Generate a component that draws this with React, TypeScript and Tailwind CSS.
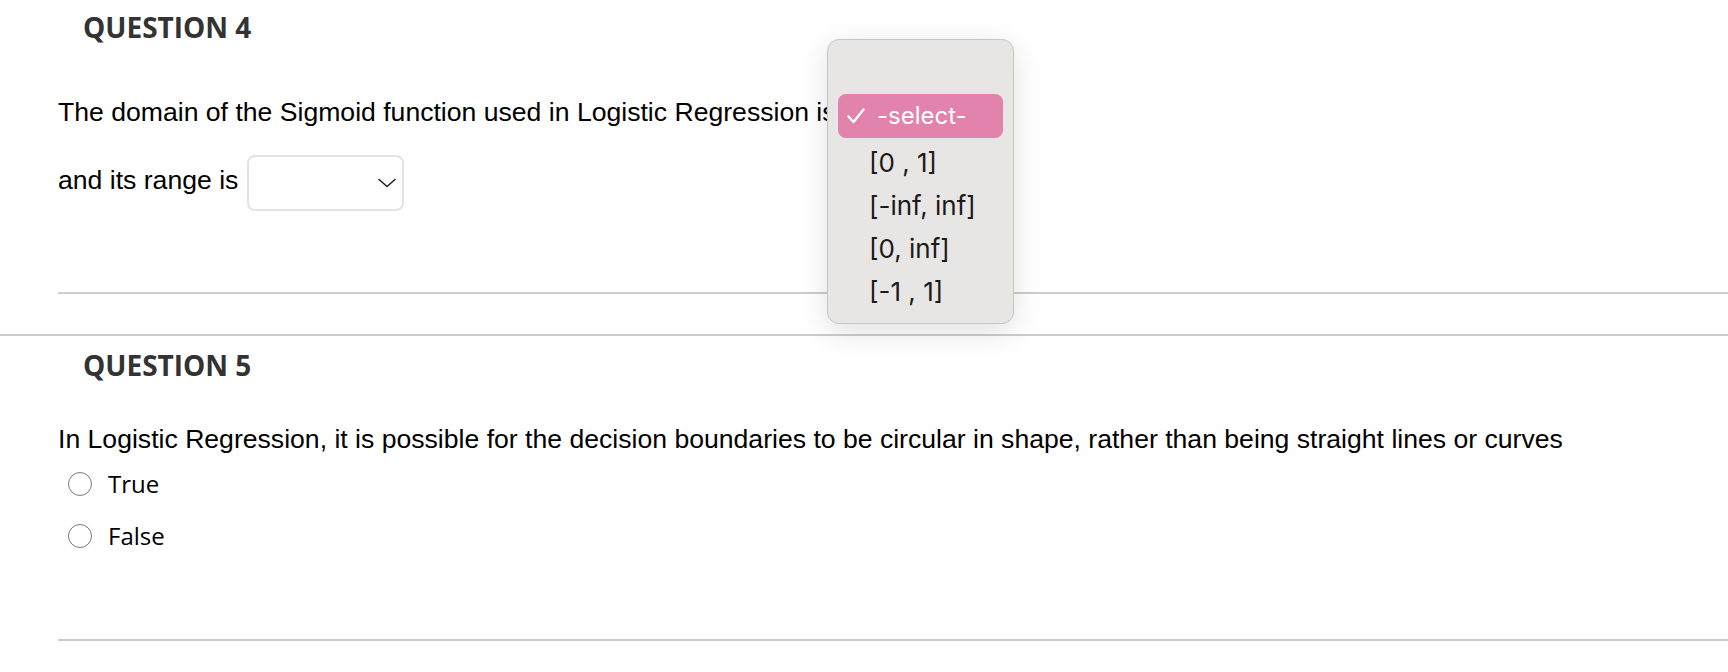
import React from "react";

const sans = { fontFamily: '"Liberation Sans", Arial, sans-serif' };

function Radio({ label }: { label: string }) {
  return (
    <div className="flex items-center h-[24px]">
      <span className="ml-[10px] w-[24px] h-[24px] rounded-full border-[1.5px] border-[#7a7a7a] bg-white box-border" />
      <span className="ml-[16px] text-[24px] leading-none text-black font-['Open_Sans',sans-serif]">{label}</span>
    </div>
  );
}

export default function App() {
  const options = ["[0 , 1]", "[-inf, inf]", "[0, inf]", "[-1 , 1]"];
  return (
    <div className="relative w-[1728px] h-[672px] bg-white overflow-hidden">
      <section className="pl-[58px]">
        <h2 className="pl-[25px] pt-[13px] text-[28px] leading-none font-bold text-[#333333] font-['Open_Sans',sans-serif]">
          QUESTION 4
        </h2>
        <p className="mt-[58px] text-[26.6px] leading-none text-black whitespace-nowrap" style={sans}>
          The domain of the Sigmoid function used in Logistic Regression is
        </p>
        <div className="mt-[29px] flex items-start">
          <span className="mt-[12px] text-[26.6px] leading-none text-black" style={sans}>
            and its range is
          </span>
          <div className="ml-[9px] w-[157px] h-[56px] rounded-[8px] border-2 border-[#e3e3e3] bg-white flex items-center justify-end pr-[6px] box-border">
            <svg width="18" height="10" viewBox="0 0 18 10" fill="none">
              <path d="M1 1.5 L9 8.5 L17 1.5" stroke="#222" strokeWidth="1.6" strokeLinecap="round" strokeLinejoin="round" />
            </svg>
          </div>
        </div>
        <div className="mt-[81px] h-[2px] bg-[#cccccc]" />
      </section>

      <div className="mt-[40px] h-[2px] bg-[#cccccc]" />

      <section className="pl-[58px]">
        <h2 className="pl-[25px] pt-[15px] text-[28px] leading-none font-bold text-[#333333] font-['Open_Sans',sans-serif]">
          QUESTION 5
        </h2>
        <p className="mt-[47px] text-[26.6px] leading-none text-black whitespace-nowrap" style={sans}>
          In Logistic Regression, it is possible for the decision boundaries to be circular in shape, rather than being straight lines or curves
        </p>
        <div className="mt-[20px] flex flex-col gap-[28px]">
          <Radio label="True" />
          <Radio label="False" />
        </div>
        <div className="mt-[91px] h-[2px] bg-[#cccccc]" />
      </section>

      <div className="absolute left-[827px] top-[39px] w-[187px] h-[285px] rounded-[12px] border border-[#c6c6c6] bg-[#e8e6e4] shadow-[0_8px_30px_rgba(0,0,0,0.12)] box-border pt-[54px] px-[10px] font-['Inter',sans-serif]">
        <div className="h-[44px] rounded-[8px] bg-[#e183ad] flex items-center text-white">
          <svg className="ml-[9px]" width="18" height="16" viewBox="0 0 18 16" fill="none">
            <path d="M1.5 8.5 L6.5 14 L16.5 1.5" stroke="#ffffff" strokeWidth="2.4" strokeLinecap="round" strokeLinejoin="round" />
          </svg>
          <span className="ml-[12px] text-[24px] leading-none">-select-</span>
        </div>
        {options.map((o, i) => (
          <div
            key={o}
            className={
              (i === 0 ? "h-[46px] pt-[3px] " : "h-[43px] ") +
              "flex items-center pl-[31px] text-[26px] leading-none text-[#1a1a1a]"
            }
          >
            {o}
          </div>
        ))}
      </div>
    </div>
  );
}
